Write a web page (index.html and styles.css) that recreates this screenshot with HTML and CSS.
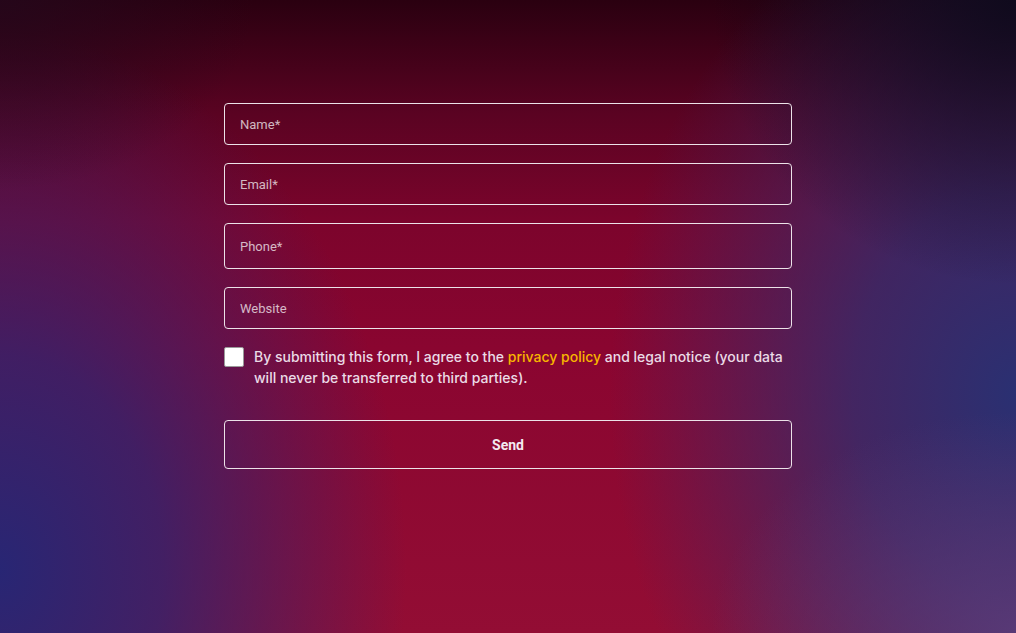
FILE: index.html
```html
<!DOCTYPE html>
<html lang="en">
<head>
<meta charset="utf-8">
<title>Contact form</title>
<link rel="stylesheet" href="styles.css">
</head>
<body>
<main class="page">
  <form class="form">
    <input class="field" type="text" placeholder="Name*">
    <input class="field" type="email" placeholder="Email*">
    <input class="field field-tall" type="tel" placeholder="Phone*">
    <input class="field" type="url" placeholder="Website">
    <label class="consent">
      <span class="box"></span>
      <span class="consent-text">By submitting this form, I agree to the <a class="link" href="#">privacy policy</a> and legal notice (your data will never be transferred to third parties).</span>
    </label>
    <button class="send" type="button">Send</button>
  </form>
</main>
</body>
</html>
```
FILE: styles.css
```css
html, body {
  margin: 0;
  padding: 0;
  height: 100%;
}
body {
  min-height: 633px;
  background:
    radial-gradient(ellipse 30% 45% at 100% 0%, rgba(14,10,28,0.95) 0%, rgba(14,10,28,0) 100%),
    radial-gradient(ellipse 25% 30% at 0% 0%, rgba(36,8,28,0.8) 0%, rgba(36,8,28,0) 100%),
    radial-gradient(ellipse 30% 35% at 100% 100%, rgba(90,62,124,0.8) 0%, rgba(90,62,124,0) 100%),
    radial-gradient(ellipse 40% 85% at 0% 90%, rgba(40,38,116,1) 0%, rgba(40,38,116,0.75) 40%, rgba(40,38,116,0) 100%),
    radial-gradient(ellipse 40% 80% at 100% 62%, rgba(42,48,114,1) 0%, rgba(42,48,114,0.75) 40%, rgba(42,48,114,0) 100%),
    linear-gradient(180deg, #2a0010 0%, #5a0322 18%, #7c042c 35%, #8a0530 55%, #930d34 100%);
  font-family: Inter, "Noto Sans", sans-serif;
}
.page {
  display: flex;
  justify-content: center;
  padding-top: 103px;
}
.form {
  width: 568px;
  display: flex;
  flex-direction: column;
  gap: 18px;
}
.field {
  box-sizing: border-box;
  height: 42px;
  margin: 0;
  padding: 0 15px;
  border: 1px solid #ece2e8;
  border-radius: 4px;
  background: transparent;
  color: #fff;
  font-family: Roboto, sans-serif;
  font-size: 13px;
  outline: none;
}
.field-tall {
  height: 46px;
}
.field::placeholder {
  color: rgba(255,255,255,0.72);
}
.consent {
  display: flex;
  align-items: flex-start;
  gap: 10px;
  color: #eadbe6;
  font-size: 14px;
  line-height: 21px;
  font-weight: 500;
}
.box {
  flex: none;
  width: 20px;
  height: 20px;
  box-sizing: border-box;
  background: #fff;
  border: 1px solid #9a9a9a;
  border-radius: 2px;
}
.consent-text {
  margin-top: -1px;
}
.link {
  color: #f7b500;
  text-decoration: none;
}
.send {
  margin-top: 14px;
  box-sizing: border-box;
  height: 49px;
  border: 1px solid #ece2e8;
  border-radius: 4px;
  background: transparent;
  color: #f3eaf0;
  font-family: Roboto, sans-serif;
  font-weight: 700;
  font-size: 14px;
  cursor: pointer;
}
```
